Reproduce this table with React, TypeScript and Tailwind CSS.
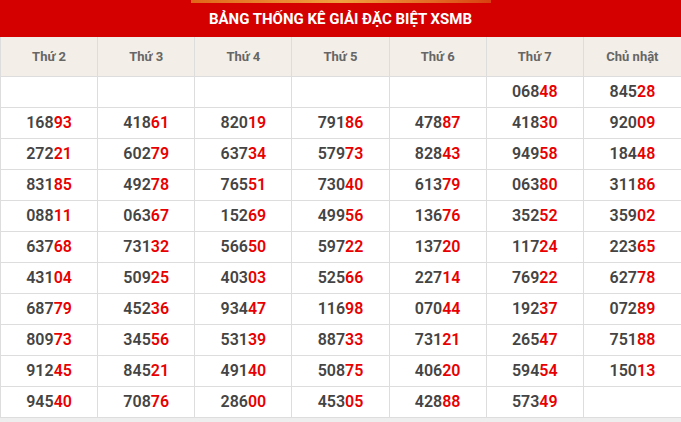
import React from "react";

const days = ["Thứ 2", "Thứ 3", "Thứ 4", "Thứ 5", "Thứ 6", "Thứ 7", "Chủ nhật"];
const rows: string[][] = [
  ["", "", "", "", "", "06848", "84528"],
  ["16893", "41861", "82019", "79186", "47887", "41830", "92009"],
  ["27221", "60279", "63734", "57973", "82843", "94958", "18448"],
  ["83185", "49278", "76551", "73040", "61379", "06380", "31186"],
  ["08811", "06367", "15269", "49956", "13676", "35252", "35902"],
  ["63768", "73132", "56650", "59722", "13720", "11724", "22365"],
  ["43104", "50925", "40303", "52566", "22714", "76922", "62778"],
  ["68779", "45236", "93447", "11698", "07044", "19237", "07289"],
  ["80973", "34556", "53139", "88733", "73121", "26547", "75188"],
  ["91245", "84521", "49140", "50875", "40620", "59454", "15013"],
  ["94540", "70876", "28600", "45305", "42888", "57349", ""],
];

export default function App() {
  return (
    <div className="w-[681px] h-[422px] bg-[#eeeeee] overflow-hidden" style={{ fontFamily: "Roboto, 'Liberation Sans', sans-serif" }}>
      <div className="bg-[#d40000] h-[37px] flex flex-col">
        <div className="h-[3px] flex justify-center">
          <div className="w-[300px] h-[3px] bg-gradient-to-r from-[#e0661a] via-[#f0a040] to-[#d84010]" />
        </div>
        <div className="flex-1 flex items-center justify-center text-white font-bold text-[15px] pb-[1px]">
          BẢNG THỐNG KÊ GIẢI ĐẶC BIỆT XSMB
        </div>
      </div>
      <div className="bg-white border-l border-[#dddddd]">
        <div className="grid grid-cols-7 h-[40px] bg-[#f3efe8] border-b border-[#dddddd]">
          {days.map((d, i) => (
            <div key={i} className={`flex items-center justify-center text-[13px] font-bold text-[#666666] ${i < 6 ? "border-r border-[#dddddd]" : ""}`}>
              {d}
            </div>
          ))}
        </div>
        {rows.map((r, ri) => (
          <div key={ri} className="grid grid-cols-7 h-[31px] border-b border-[#dddddd]">
            {r.map((n, ci) => (
              <div key={ci} className={`flex items-center justify-center text-[16px] font-semibold ${ci < 6 ? "border-r border-[#dddddd]" : ""}`}>
                {n && (
                  <span>
                    <span className="text-[#444444]">{n.slice(0, 3)}</span>
                    <span className="text-[#e80000]">{n.slice(3)}</span>
                  </span>
                )}
              </div>
            ))}
          </div>
        ))}
      </div>
    </div>
  );
}
